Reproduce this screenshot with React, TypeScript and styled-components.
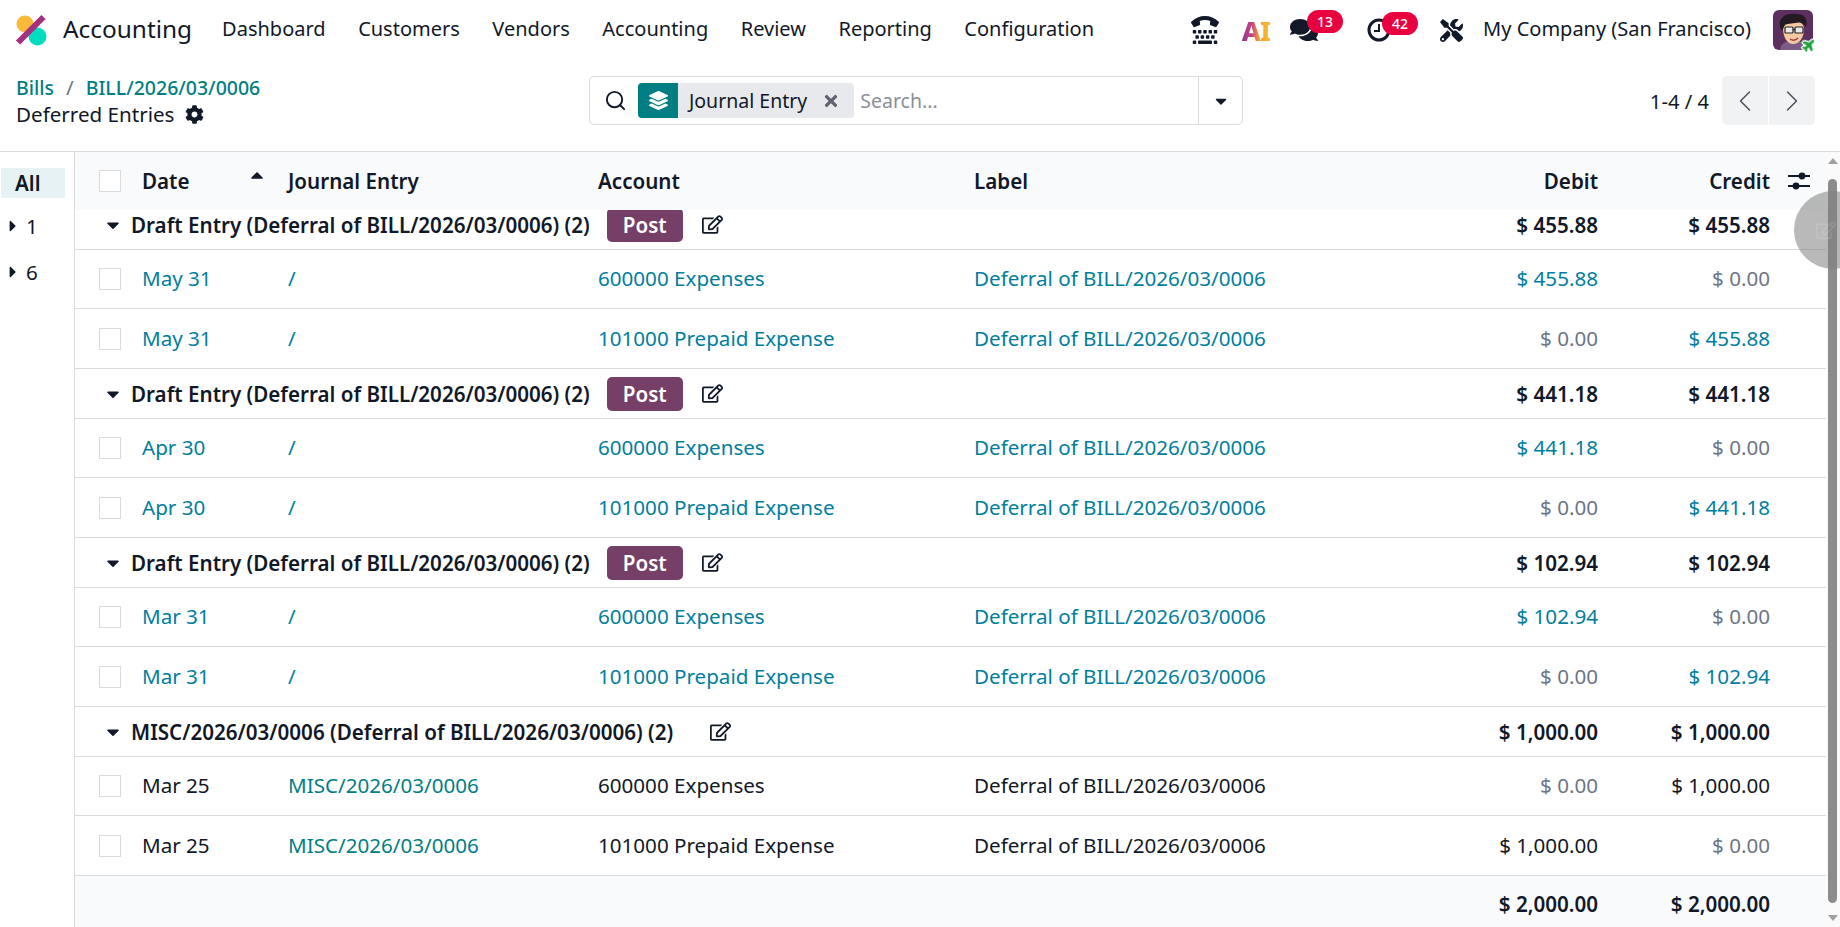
import React, { useLayoutEffect, useRef } from 'react';
import styled, { createGlobalStyle } from 'styled-components';
import {
  FaCaretDown,
  FaCaretRight,
  FaCaretUp,
  FaCog,
  FaComments,
  FaLayerGroup,
  FaPlane,
  FaRegEdit,
  FaTimes,
  FaTools,
  FaTty,
} from 'react-icons/fa';
import { ChevronLeft, ChevronRight, Search } from 'lucide-react';

const INK = '#111827';
const TEAL = '#017e84';
const BLUE = '#017e9e';
const MUTED = '#6c7585';
const LINE = '#d8dadd';
const SOFT = '#f9fafb';

const GlobalStyle = createGlobalStyle`
  html, body {
    margin: 0;
    height: 100%;
    overflow: hidden;
    background: #fff;
  }
  body {
    font-family: 'Noto Sans', 'Open Sans', sans-serif;
    font-size: 20.6px;
    color: ${INK};
  }
`;

const Page = styled.div`
  height: 927px;
  display: flex;
  flex-direction: column;
`;

const NavBar = styled.header`
  height: 60px;
  flex: none;
  display: flex;
  align-items: center;
  padding: 0 27px 0 15px;
`;

const BrandName = styled.span`
  font-size: 24.4px;
  margin: 0 30px 4px 16px;
`;

const NavMenu = styled.nav`
  display: flex;
  gap: 32.5px;
  margin-bottom: 4px;
`;

const NavLink = styled.span`
  font-size: 20px;
`;

const NavTray = styled.div`
  margin-left: auto;
  display: flex;
  align-items: center;
`;

const TrayIcon = styled.span<{ $gap: number }>`
  position: relative;
  display: flex;
  align-items: center;
  margin-right: ${(p) => p.$gap}px;
`;

const Badge = styled.span<{ $left: number }>`
  position: absolute;
  top: -6px;
  left: ${(p) => p.$left}px;
  width: 36px;
  height: 23px;
  border-radius: 12px;
  background: #e8003f;
  color: #fff;
  font-size: 14px;
  font-weight: 500;
  display: flex;
  align-items: center;
  justify-content: center;
`;

const AiMark = styled.span`
  font-size: 27px;
  line-height: 1;
  font-weight: 800;
  letter-spacing: -1px;
  background: linear-gradient(90deg, #8e3a8e 0%, #c9407f 35%, #f0a030 60%, #fbbd2c 100%);
  -webkit-background-clip: text;
  background-clip: text;
  color: transparent;
`;

const CompanyName = styled.span`
  font-size: 20px;
  margin: 0 22px 3px 0;
`;

const ControlPanel = styled.section`
  height: 92px;
  flex: none;
  box-sizing: border-box;
  border-bottom: 1px solid ${LINE};
  padding: 14px 25px 0 16px;
  display: grid;
  grid-template-columns: 573px 654px 1fr;
  align-items: start;
`;

const Breadcrumbs = styled.div`
  line-height: 26px;
`;

const Crumb = styled.a`
  color: ${TEAL};
  font-size: 19.5px;
  font-weight: 500;
`;

const CrumbSep = styled.span`
  color: ${MUTED};
  margin: 0 12px;
`;

const Current = styled.div`
  display: flex;
  align-items: center;
  gap: 10px;
`;

const SearchBox = styled.div`
  height: 49px;
  margin-top: 2px;
  box-sizing: border-box;
  border: 1px solid ${LINE};
  border-radius: 5px;
  display: flex;
  align-items: center;
  padding-left: 14px;
`;

const Facet = styled.div`
  height: 35px;
  margin-left: 11px;
  display: flex;
  align-items: center;
  background: #e7e9ed;
  border-radius: 4px;
  overflow: hidden;
`;

const FacetIcon = styled.span`
  width: 40px;
  height: 100%;
  background: ${TEAL};
  color: #fff;
  display: flex;
  align-items: center;
  justify-content: center;
`;

const FacetLabel = styled.span`
  font-size: 19.5px;
  margin: 0 15px 0 11px;
`;

const FacetClose = styled.span`
  display: flex;
  margin-right: 14px;
  color: #5f636f;
`;

const SearchPlaceholder = styled.span`
  margin-left: 6px;
  font-size: 19.5px;
  color: #8a8f99;
`;

const SearchToggle = styled.span`
  margin-left: auto;
  width: 43px;
  height: 100%;
  border-left: 1px solid ${LINE};
  display: flex;
  align-items: center;
  justify-content: center;
`;

const Pager = styled.div`
  display: flex;
  align-items: center;
  justify-content: flex-end;
  height: 49px;
  margin-top: 2px;
`;

const PagerValue = styled.span`
  font-size: 20.2px;
  margin-right: 13px;
`;

const PagerButton = styled.span<{ $side: 'left' | 'right' }>`
  width: 46px;
  height: 49px;
  margin-left: ${(p) => (p.$side === 'right' ? 1 : 0)}px;
  background: #f1f2f4;
  color: #4a4f5a;
  border-radius: ${(p) => (p.$side === 'left' ? '5px 0 0 5px' : '0 5px 5px 0')};
  display: flex;
  align-items: center;
  justify-content: center;
`;

const Main = styled.main`
  flex: 1;
  min-height: 0;
  display: flex;
  position: relative;
`;

const SearchPanel = styled.aside`
  width: 75px;
  flex: none;
  box-sizing: border-box;
  border-right: 1px solid ${LINE};
  padding-top: 16px;
`;

const PanelAll = styled.div`
  margin: 0 0 5px 1px;
  padding-left: 14px;
  box-sizing: border-box;
  width: 64px;
  height: 30px;
  background: #e6f2f3;
  font-weight: 600;
  display: flex;
  align-items: center;
`;

const PanelItem = styled.div`
  height: 46px;
  display: flex;
  align-items: center;
  gap: 4px;
  padding-left: 4px;
`;

const ListScroll = styled.div`
  width: 1751px;
  flex: none;
  overflow: hidden;
`;

const Table = styled.table`
  width: 1751px;
  table-layout: fixed;
  border-collapse: separate;
  border-spacing: 0;
`;

const Head = styled.thead`
  position: sticky;
  top: 0;
  z-index: 2;
`;

const HeadCell = styled.th<{ $right?: boolean }>`
  height: 58px;
  padding: 0 12px 1px;
  box-sizing: border-box;
  background: ${SOFT};
  font-weight: 600;
  text-align: ${(p) => (p.$right ? 'right' : 'left')};
`;

const SelectHead = styled(HeadCell)`
  padding: 0;
`;

const SortCell = styled(HeadCell)`
  position: relative;
`;

const SortCaret = styled.span`
  position: absolute;
  right: 9px;
  top: 13px;
  display: flex;
`;

const OptionsIcon = styled.svg`
  display: block;
  margin-left: -6px;
`;

const Cell = styled.td<{ $right?: boolean; $tone?: string; $strong?: boolean }>`
  padding: 0 12px;
  box-sizing: border-box;
  border-bottom: 1px solid ${LINE};
  text-align: ${(p) => (p.$right ? 'right' : 'left')};
  color: ${(p) => p.$tone ?? INK};
  font-weight: ${(p) => (p.$strong ? 600 : 400)};
  white-space: nowrap;
`;

const DataCell = styled(Cell)`
  padding-bottom: 2px;
`;

const DataRow = styled.tr<{ $height: number }>`
  height: ${(p) => p.$height}px;
`;

const SelectCell = styled(Cell)`
  padding: 0;
`;

const GroupRow = styled.tr`
  height: 50px;
`;

const GroupTitle = styled(Cell)`
  padding-left: 28px;
`;

const GroupInner = styled.div`
  display: flex;
  align-items: center;
  font-weight: 600;
`;

const GroupName = styled.span`
  margin-left: 8px;
`;

const PostButton = styled.button`
  width: 76px;
  height: 34px;
  margin-left: 17px;
  padding: 0;
  border: 0;
  border-radius: 5px;
  background: #763f68;
  color: #fff;
  font: inherit;
  font-weight: 600;
`;

const EditIcon = styled.span<{ $gap: number }>`
  display: flex;
  margin-left: ${(p) => p.$gap}px;
`;

const Check = styled.span`
  display: block;
  margin-left: 24px;
  width: 20px;
  height: 20px;
  border: 1px solid ${LINE};
  background: #fff;
`;

const FootCell = styled.td<{ $right?: boolean }>`
  height: 56px;
  padding: 0 12px;
  box-sizing: border-box;
  background: ${SOFT};
  text-align: ${(p) => (p.$right ? 'right' : 'left')};
  font-weight: 600;
`;

const ScrollGutter = styled.div`
  flex: none;
  width: 14px;
  background: #fafafa;
  position: relative;
`;

const ScrollThumb = styled.div`
  position: absolute;
  left: 2px;
  right: 3px;
  top: 27px;
  bottom: 24px;
  border-radius: 5px;
  background: #8c8c8c;
`;

const ScrollArrow = styled.span<{ $down?: boolean }>`
  position: absolute;
  left: 2px;
  ${(p) => (p.$down ? 'bottom: 6px;' : 'top: 6px;')}
  width: 0;
  height: 0;
  border-left: 5px solid transparent;
  border-right: 5px solid transparent;
  ${(p) => (p.$down ? 'border-top: 6px solid #a0a0a0;' : 'border-bottom: 6px solid #a0a0a0;')}
`;

const TouchDot = styled.div`
  position: absolute;
  left: 1794px;
  top: 39px;
  width: 78px;
  height: 78px;
  border-radius: 50%;
  background: rgba(128, 128, 128, 0.55);
  z-index: 3;
  display: flex;
  align-items: center;
  padding-left: 22px;
  box-sizing: border-box;
  color: rgba(255, 255, 255, 0.12);
`;

const AvatarBadge = styled.span`
  position: absolute;
  right: -3px;
  bottom: -2px;
  display: flex;
  color: #1aa33c;
  filter: drop-shadow(1px 0 0 #fff) drop-shadow(-1px 0 0 #fff) drop-shadow(0 1px 0 #fff)
    drop-shadow(0 -1px 0 #fff);
  transform: rotate(-45deg);
`;

const AvatarWrap = styled.span`
  position: relative;
  display: flex;
`;

const Logo = () => (
  <svg width="32" height="32" viewBox="0 0 32 32">
    <circle cx="10" cy="10" r="8.5" fill="#fbb93a" />
    <circle cx="22.5" cy="22.5" r="9" fill="#00dcc0" />
    <path d="M3 28.5 L28.5 3" stroke="#a4317f" strokeWidth="6" />
  </svg>
);

const Avatar = () => (
  <svg width="40" height="40" viewBox="0 0 40 40">
    <rect width="40" height="40" rx="6" fill="#5c2f5e" />
    <path d="M7 40 C8 32 14 31 20 31 C28 31 33 33 34 40 Z" fill="#7a5c86" />
    <path d="M10 18 C10 8 31 8 31 19 C31 28 26 34 20 34 C14 34 10 27 10 18 Z" fill="#f2c9a0" />
    <path d="M7 17 C5 6 15 3 24 4 C32 4 35 10 33 17 C30 12 26 12 22 13 C17 14 12 13 11 17 L9 21 Z" fill="#241a22" />
    <rect x="12" y="17" width="8" height="6" rx="1" fill="#e9e9e9" stroke="#222" strokeWidth="1.2" />
    <rect x="22" y="17" width="8" height="6" rx="1" fill="#e9e9e9" stroke="#222" strokeWidth="1.2" />
    <path d="M20 19.5 H22" stroke="#222" strokeWidth="1.2" />
    <path d="M17 29 C20 31 23 30 25 28" stroke="#a13a3a" strokeWidth="1.4" fill="none" />
  </svg>
);

const ListOptions = () => (
  <OptionsIcon width="22" height="20" viewBox="0 0 22 20" stroke={INK} strokeWidth="2" fill={INK}>
    <path d="M0 5 H22 M0 15 H22" />
    <circle cx="14" cy="5" r="3.4" stroke="none" />
    <circle cx="8" cy="15" r="3.4" stroke="none" />
  </OptionsIcon>
);

type Row = {
  date: string;
  entry: string;
  account: string;
  label: string;
  debit: string;
  credit: string;
};

type Group = {
  name: string;
  total: string;
  draft: boolean;
  rows: Row[];
};

const LABEL = 'Deferral of BILL/2026/03/0006';

const draftGroup = (date: string, amount: string): Group => ({
  name: `Draft Entry (${LABEL}) (2)`,
  total: amount,
  draft: true,
  rows: [
    { date, entry: '/', account: '600000 Expenses', label: LABEL, debit: amount, credit: '$ 0.00' },
    { date, entry: '/', account: '101000 Prepaid Expense', label: LABEL, debit: '$ 0.00', credit: amount },
  ],
});

const GROUPS: Group[] = [
  draftGroup('May 31', '$ 455.88'),
  draftGroup('Apr 30', '$ 441.18'),
  draftGroup('Mar 31', '$ 102.94'),
  {
    name: `MISC/2026/03/0006 (${LABEL}) (2)`,
    total: '$ 1,000.00',
    draft: false,
    rows: [
      { date: 'Mar 25', entry: 'MISC/2026/03/0006', account: '600000 Expenses', label: LABEL, debit: '$ 0.00', credit: '$ 1,000.00' },
      { date: 'Mar 25', entry: 'MISC/2026/03/0006', account: '101000 Prepaid Expense', label: LABEL, debit: '$ 1,000.00', credit: '$ 0.00' },
    ],
  },
];

const MENU = ['Dashboard', 'Customers', 'Vendors', 'Accounting', 'Review', 'Reporting', 'Configuration'];

const amountTone = (value: string, draft: boolean) => {
  if (value === '$ 0.00') return MUTED;
  return draft ? BLUE : INK;
};

const App: React.FC = () => {
  const scrollRef = useRef<HTMLDivElement>(null);

  // the list is a little scrolled in the screenshot, first group slides under the header
  useLayoutEffect(() => {
    if (scrollRef.current) scrollRef.current.scrollTop = 10;
  }, []);

  return (
    <Page>
      <GlobalStyle />
      <NavBar>
        <Logo />
        <BrandName>Accounting</BrandName>
        <NavMenu>
          {MENU.map((item) => (
            <NavLink key={item}>{item}</NavLink>
          ))}
        </NavMenu>
        <NavTray>
          <TrayIcon $gap={23}>
            <FaTty size={28} />
          </TrayIcon>
          <TrayIcon $gap={20}>
            <AiMark>AI</AiMark>
          </TrayIcon>
          <TrayIcon $gap={49}>
            <FaComments size={28} />
            <Badge $left={17}>13</Badge>
          </TrayIcon>
          <TrayIcon $gap={49}>
            <svg width="24" height="24" viewBox="0 0 24 24" fill="none" stroke={INK} strokeWidth="3">
              <circle cx="12" cy="12" r="10" />
              <path d="M12 6 V13 H7" strokeWidth="2" />
            </svg>
            <Badge $left={15}>42</Badge>
          </TrayIcon>
          <TrayIcon $gap={20}>
            <FaTools size={23} />
          </TrayIcon>
          <CompanyName>My Company (San Francisco)</CompanyName>
          <AvatarWrap>
            <Avatar />
            <AvatarBadge>
              <FaPlane size={14} />
            </AvatarBadge>
          </AvatarWrap>
        </NavTray>
      </NavBar>

      <ControlPanel>
        <Breadcrumbs>
          <div>
            <Crumb>Bills</Crumb>
            <CrumbSep>/</CrumbSep>
            <Crumb>BILL/2026/03/0006</Crumb>
          </div>
          <Current>
            Deferred Entries <FaCog size={19} />
          </Current>
        </Breadcrumbs>
        <SearchBox>
          <Search size={23} strokeWidth={2} />
          <Facet>
            <FacetIcon>
              <FaLayerGroup size={19} />
            </FacetIcon>
            <FacetLabel>Journal Entry</FacetLabel>
            <FacetClose>
              <FaTimes size={18} />
            </FacetClose>
          </Facet>
          <SearchPlaceholder>Search...</SearchPlaceholder>
          <SearchToggle>
            <FaCaretDown size={18} />
          </SearchToggle>
        </SearchBox>
        <Pager>
          <PagerValue>1-4 / 4</PagerValue>
          <PagerButton $side="left">
            <ChevronLeft size={36} strokeWidth={1} />
          </PagerButton>
          <PagerButton $side="right">
            <ChevronRight size={36} strokeWidth={1} />
          </PagerButton>
        </Pager>
      </ControlPanel>

      <Main>
        <SearchPanel>
          <PanelAll>All</PanelAll>
          {['1', '6'].map((value) => (
            <PanelItem key={value}>
              <FaCaretRight size={18} />
              {value}
            </PanelItem>
          ))}
        </SearchPanel>

        <ListScroll ref={scrollRef}>
          <Table>
            <colgroup>
              <col width={55} />
              <col width={146} />
              <col width={310} />
              <col width={376} />
              <col width={438} />
              <col width={210} />
              <col width={172} />
              <col width={44} />
            </colgroup>
            <Head>
              <tr>
                <SelectHead>
                  <Check />
                </SelectHead>
                <SortCell>
                  Date
                  <SortCaret>
                    <FaCaretUp size={20} />
                  </SortCaret>
                </SortCell>
                <HeadCell>Journal Entry</HeadCell>
                <HeadCell>Account</HeadCell>
                <HeadCell>Label</HeadCell>
                <HeadCell $right>Debit</HeadCell>
                <HeadCell $right>Credit</HeadCell>
                <HeadCell>
                  <ListOptions />
                </HeadCell>
              </tr>
            </Head>
            <tbody>
              {GROUPS.map((group) => (
                <React.Fragment key={group.name + group.total}>
                  <GroupRow>
                    <GroupTitle colSpan={5}>
                      <GroupInner>
                        <FaCaretDown size={20} />
                        <GroupName>{group.name}</GroupName>
                        {group.draft && <PostButton>Post</PostButton>}
                        <EditIcon $gap={group.draft ? 19 : 37}>
                          <FaRegEdit size={21} />
                        </EditIcon>
                      </GroupInner>
                    </GroupTitle>
                    <Cell $right $strong>
                      {group.total}
                    </Cell>
                    <Cell $right $strong>
                      {group.total}
                    </Cell>
                    <Cell />
                  </GroupRow>
                  {group.rows.map((row, index) => (
                    <DataRow key={row.account} $height={index === 0 ? 59 : 60}>
                      <SelectCell>
                        <Check />
                      </SelectCell>
                      <DataCell $tone={group.draft ? BLUE : INK}>{row.date}</DataCell>
                      <DataCell $tone={group.draft ? BLUE : TEAL}>{row.entry}</DataCell>
                      <DataCell $tone={group.draft ? BLUE : INK}>{row.account}</DataCell>
                      <DataCell $tone={group.draft ? BLUE : INK}>{row.label}</DataCell>
                      <DataCell $right $tone={amountTone(row.debit, group.draft)}>
                        {row.debit}
                      </DataCell>
                      <DataCell $right $tone={amountTone(row.credit, group.draft)}>
                        {row.credit}
                      </DataCell>
                      <Cell />
                    </DataRow>
                  ))}
                </React.Fragment>
              ))}
            </tbody>
            <tfoot>
              <tr>
                <FootCell colSpan={5} />
                <FootCell $right>$ 2,000.00</FootCell>
                <FootCell $right>$ 2,000.00</FootCell>
                <FootCell />
              </tr>
            </tfoot>
          </Table>
        </ListScroll>

        <ScrollGutter>
          <ScrollArrow />
          <ScrollThumb />
          <ScrollArrow $down />
        </ScrollGutter>

        <TouchDot>
          <FaRegEdit size={20} />
        </TouchDot>
      </Main>
    </Page>
  );
};

export default App;
